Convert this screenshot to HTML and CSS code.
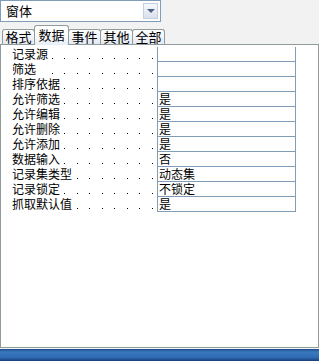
FILE: index.html
```html
<!DOCTYPE html>
<html lang="zh-CN">
<head>
	<meta charset="UTF-8">
	<title>属性</title>
	<link rel="stylesheet" href="styles.css">
</head>
<body>
	<div class="combo">
		<span class="combo-text">窗体</span>
		<span class="combo-button"><span class="arrow"></span></span>
	</div>
	<div class="tabs">
		<div class="tab">格式</div>
		<div class="tab selected">数据</div>
		<div class="tab">事件</div>
		<div class="tab">其他</div>
		<div class="tab">全部</div>
	</div>
	<div class="panel">
		<div class="props">
			<div class="label"><span>记录源</span></div><div class="value"></div>
			<div class="label"><span>筛选</span></div><div class="value"></div>
			<div class="label"><span>排序依据</span></div><div class="value"></div>
			<div class="label"><span>允许筛选</span></div><div class="value"><span>是</span></div>
			<div class="label"><span>允许编辑</span></div><div class="value"><span>是</span></div>
			<div class="label"><span>允许删除</span></div><div class="value"><span>是</span></div>
			<div class="label"><span>允许添加</span></div><div class="value"><span>是</span></div>
			<div class="label"><span>数据输入</span></div><div class="value"><span>否</span></div>
			<div class="label"><span>记录集类型</span></div><div class="value"><span>动态集</span></div>
			<div class="label"><span>记录锁定</span></div><div class="value"><span>不锁定</span></div>
			<div class="label"><span>抓取默认值</span></div><div class="value"><span>是</span></div>
		</div>
	</div>
	<div class="statusbar"></div>
</body>
</html>
```

FILE: styles.css
```css
html, body {
	margin: 0;
	padding: 0;
}
body {
	width: 319px;
	height: 361px;
	overflow: hidden;
	background: #f2f2f2;
	font-family: "Noto Sans CJK SC", "Noto Sans", sans-serif;
	font-size: 12px;
	color: #000;
	display: flex;
	flex-direction: column;
}
.combo {
	box-sizing: border-box;
	width: 161px;
	height: 22px;
	border: 1px solid #7f9db9;
	background: #fff;
	display: flex;
	align-items: center;
	justify-content: space-between;
	padding: 0 2px 0 5px;
}
.combo-text {
	font-size: 13px;
	line-height: 16px;
}
.combo-button {
	box-sizing: border-box;
	width: 15px;
	height: 16px;
	border: 1px solid #c3d0e3;
	background: linear-gradient(#f7f8fb, #d9e1ee);
	display: flex;
	align-items: center;
	justify-content: center;
}
.arrow {
	width: 0;
	height: 0;
	border-left: 4px solid transparent;
	border-right: 4px solid transparent;
	border-top: 4px solid #4d6185;
}
.tabs {
	display: flex;
	align-items: flex-end;
	height: 19px;
	margin-top: 3px;
	padding-left: 2px;
}
.tab {
	box-sizing: border-box;
	width: 33px;
	height: 15px;
	border: 1px solid #919b9c;
	border-bottom: none;
	border-radius: 3px 3px 0 0;
	background: linear-gradient(#ffffff, #e3e9f2);
	font-size: 13px;
	line-height: 14px;
	text-align: center;
	margin-right: -1px;
}
.tab.selected {
	width: 35px;
	height: 20px;
	margin-bottom: -1px;
	position: relative;
	z-index: 1;
	line-height: 18px;
	background: linear-gradient(#ffffff 40%, #e8eef7);
}
.panel {
	box-sizing: border-box;
	height: 304px;
	border: 1px solid #919b9c;
	background: #fff;
	padding-top: 2px;
}
.props {
	display: grid;
	grid-template-columns: 156px 139px;
	grid-auto-rows: 15px;
}
.label {
	padding-left: 11px;
	height: 15px;
	line-height: 14px;
	background-image: repeating-linear-gradient(to left, transparent 0 4px, #000 4px 5px, transparent 5px 12.5px);
	background-size: 100% 1px;
	background-repeat: no-repeat;
	background-position: left bottom 3px;
	background-clip: content-box;
	background-origin: border-box;
	white-space: nowrap;
}
.label span {
	background: #fff;
	padding-right: 4px;
}
.value {
	box-sizing: border-box;
	border-left: 1px solid #7f9db9;
	border-right: 1px solid #7f9db9;
	border-bottom: 1px solid #7f9db9;
	line-height: 14px;
	padding-left: 1px;
	white-space: nowrap;
}
.statusbar {
	margin-top: 1px;
	flex: 1;
	background: linear-gradient(#1c4c8a 0, #3a78c0 25%, #2f6bb3 70%, #173f7a 100%);
}
```
